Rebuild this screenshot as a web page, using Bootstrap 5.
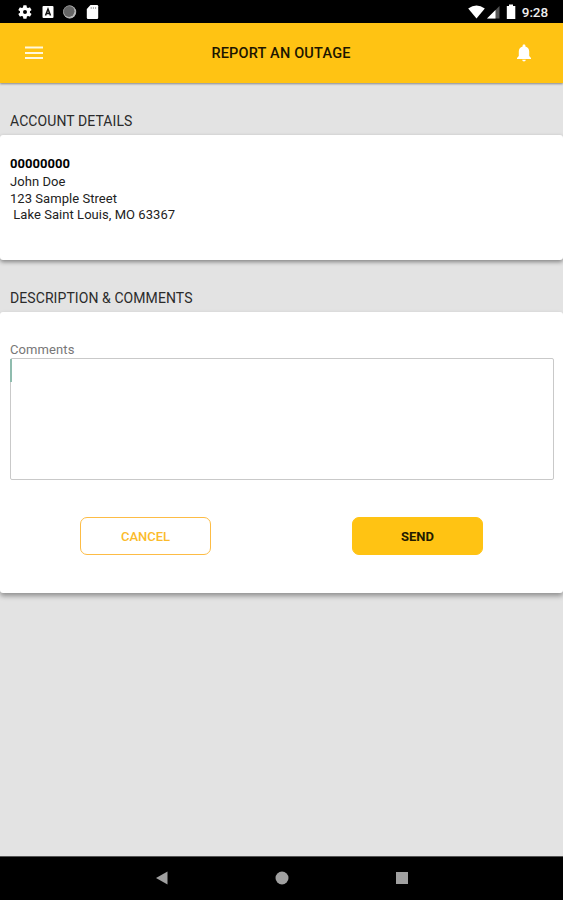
<!DOCTYPE html>
<html lang="en">
<head>
<meta charset="utf-8">
<meta name="viewport" content="width=device-width, initial-scale=1">
<title>Report an Outage</title>
<link href="https://cdn.jsdelivr.net/npm/bootstrap@5.3.0/dist/css/bootstrap.min.css" rel="stylesheet">
<style>
body{font-family:Roboto,"Liberation Sans",sans-serif;background:#e3e3e3;height:900px;overflow:hidden;color:#222}
svg{display:block;flex:none}
.status-bar{height:23px;background:#000;padding:1px 15px 0 17px}
.status-left{gap:6.5px}
.clock{font-size:13.5px;font-weight:500;line-height:22px;color:#eee;margin-left:5px;letter-spacing:-.1px}
.app-bar{height:60px;background:#ffc313;box-shadow:0 1px 2px rgba(0,0,0,.4);padding:0 30px 0 25px}
.app-title{font-size:14.5px;font-weight:500;color:#1c1500;line-height:20px;letter-spacing:.2px;padding:2px 0 0 4px}
.section-title{font-size:14px;font-weight:400;line-height:20px;padding-left:10px;margin:0;color:#2b2b2b;letter-spacing:.08px}
.title-account{margin-top:28px;margin-bottom:4px}
.title-comments{margin-top:28px;margin-bottom:4px}
.panel{border:0;border-radius:3px;box-shadow:0 2px 4px rgba(0,0,0,.42)}
.panel-account{height:125px;padding:20px 10px 0}
.panel-comments{height:281px;padding:30px 10px 0;box-shadow:0 3px 5px rgba(0,0,0,.36)}
.detail{font-size:13px;line-height:17px;white-space:pre;letter-spacing:.05px}
.account-no{font-weight:700;line-height:18px;color:#000}
.city-line{line-height:15px}
.comment-label{font-size:13px;line-height:16px;color:#777;letter-spacing:.1px}
.comment-box{height:122px;border:1px solid #c9c9c9;border-radius:2px;margin-right:-1px}
.caret{width:2px;height:23px;background:#8fbcae;margin-left:-1px}
.actions{margin-top:37px;padding:0 70px}
.action-btn{width:131px;height:38px;border-radius:7px;font-size:13px;font-weight:500;padding:2px 0 0;line-height:34px}
.btn-cancel,.btn-cancel:hover{color:#fbbb2b;background:#fff;border:1px solid #fdbc45}
.btn-send,.btn-send:hover{color:#231b00;background:#ffc313;border-color:#ffc313;font-weight:700}
.nav-bar{height:44px;background:#000;border-top:1px solid #555;padding:0 154px 2px}
</style>
<script src="https://cdn.jsdelivr.net/npm/bootstrap@5.3.0/dist/js/bootstrap.bundle.min.js"></script>
</head>
<body class="d-flex flex-column">
<header>
<div class="status-bar d-flex justify-content-between align-items-center">
  <div class="status-left d-flex align-items-center">
    <svg width="16" height="16" viewBox="0 0 24 24" fill="#fff"><path d="M19.4 13a7.500 7.500 0 0 0 0-2l2.100-1.600c.2-.2.300-.4.100-.7l-2-3.400c-.1-.2-.4-.3-.6-.2l-2.500 1a7 7 0 0 0-1.700-1l-.4-2.600a.5.5 0 0 0-.5-.5h-4a.5.5 0 0 0-.5.5L9 5.100a7 7 0 0 0-1.700 1l-2.500-1c-.2-.1-.5 0-.6.200l-2 3.400c-.1.300-.1.500.1.700L4.500 11a7.500 7.500 0 0 0 0 2l-2.200 1.600c-.2.200-.2.400-.1.700l2 3.400c.1.200.4.300.6.200l2.500-1a7 7 0 0 0 1.700 1l.4 2.600c0 .3.200.5.500.5h4c.3 0 .5-.2.500-.5l.4-2.600a7 7 0 0 0 1.700-1l2.500 1c.2.100.5 0 .6-.2l2-3.400c.2-.3.100-.5-.1-.7zM12 15a3 3 0 1 1 0-6 3 3 0 0 1 0 6z" fill-rule="evenodd"/></svg>
    <svg width="16" height="16" viewBox="0 0 16 16"><rect x="2.500" y="2" width="11" height="12" rx="1" fill="#fff"/><path d="M5.500 11.500 8 5l2.500 6.500M6.500 9.500h3" fill="none" stroke="#111" stroke-width="1.500"/></svg>
    <svg width="16" height="16" viewBox="0 0 16 16"><circle cx="7.700" cy="8" r="6.500" fill="#ccc"/><circle cx="7" cy="7.300" r="5.600" fill="#666"/><circle cx="7.500" cy="7.800" r="6" fill="none" stroke="#999" stroke-width=".6"/></svg>
    <svg width="16" height="16" viewBox="0 0 16 16"><path d="M5.500 1h6.500q1.200 0 1.200 1.200v11.600q0 1.200-1.200 1.200h-9q-1.200 0-1.200-1.200V5z" fill="#fff"/><path d="M6.200 3v2M8.400 3v2M10.600 3v2" stroke="#aaa" stroke-width="1"/></svg>
  </div>
  <div class="d-flex align-items-center">
    <svg width="17" height="16" viewBox="0 0 17 16"><path d="M.2 4.500Q8.500-1.500 16.800 4.500L8.500 14.500z" fill="#fff"/></svg>
    <svg width="16" height="16" viewBox="0 0 16 16"><path d="M14.500 2v12.500H2z" fill="#555"/><path d="M10.500 6V14.500H2z" fill="#fff"/></svg>
    <svg class="ms-1" width="12" height="16" viewBox="0 0 12 16"><path d="M4 .5h4V2h2.300v13H1.800V2H4z" fill="#fff"/></svg>
    <span class="clock">9:28</span>
  </div>
</div>
<nav class="app-bar d-flex justify-content-between align-items-center">
  <svg width="18" height="14" viewBox="0 0 18 14"><path d="M0 1.500h18M0 7h18M0 12h18" stroke="#fff8df" stroke-width="2"/></svg>
  <h1 class="app-title m-0">REPORT AN OUTAGE</h1>
  <svg width="18" height="18" viewBox="0 0 18 18"><path d="M9 .5c.9 0 1.400.5 1.400 1.300v.6c2.400.6 3.800 2.500 3.800 5.200v4.300l1.800 2v1H2v-1l1.800-2V7.600c0-2.700 1.400-4.600 3.800-5.200v-.6C7.600 1 8.100.5 9 .5zM7.200 15.800h3.600a1.800 1.800 0 0 1-3.600 0z" fill="#fff"/></svg>
</nav>
</header>
<main class="flex-grow-1">
  <h2 class="section-title title-account">ACCOUNT DETAILS</h2>
  <section class="card panel panel-account">
    <div class="detail account-no">00000000</div>
    <div class="detail">John Doe</div>
    <div class="detail">123 Sample Street</div>
    <div class="detail city-line"> Lake Saint Louis, MO 63367</div>
  </section>
  <h2 class="section-title title-comments">DESCRIPTION &amp; COMMENTS</h2>
  <section class="card panel panel-comments">
    <div class="comment-label">Comments</div>
    <div class="comment-box" role="textbox" aria-label="Comments"><div class="caret"></div></div>
    <div class="actions d-flex justify-content-between">
      <button class="btn action-btn btn-cancel">CANCEL</button>
      <button class="btn action-btn btn-send">SEND</button>
    </div>
  </section>
</main>
<footer class="nav-bar d-flex justify-content-between align-items-center">
  <svg width="14" height="14" viewBox="0 0 14 14"><path d="M13.500 .5v13L2 7z" fill="#a0a0a0"/></svg>
  <svg width="14" height="14" viewBox="0 0 14 14"><circle cx="7" cy="7" r="6.500" fill="#a0a0a0"/></svg>
  <svg width="14" height="14" viewBox="0 0 14 14"><path d="M1 1h12v12H1z" fill="#a0a0a0"/></svg>
</footer>
</body>
</html>
